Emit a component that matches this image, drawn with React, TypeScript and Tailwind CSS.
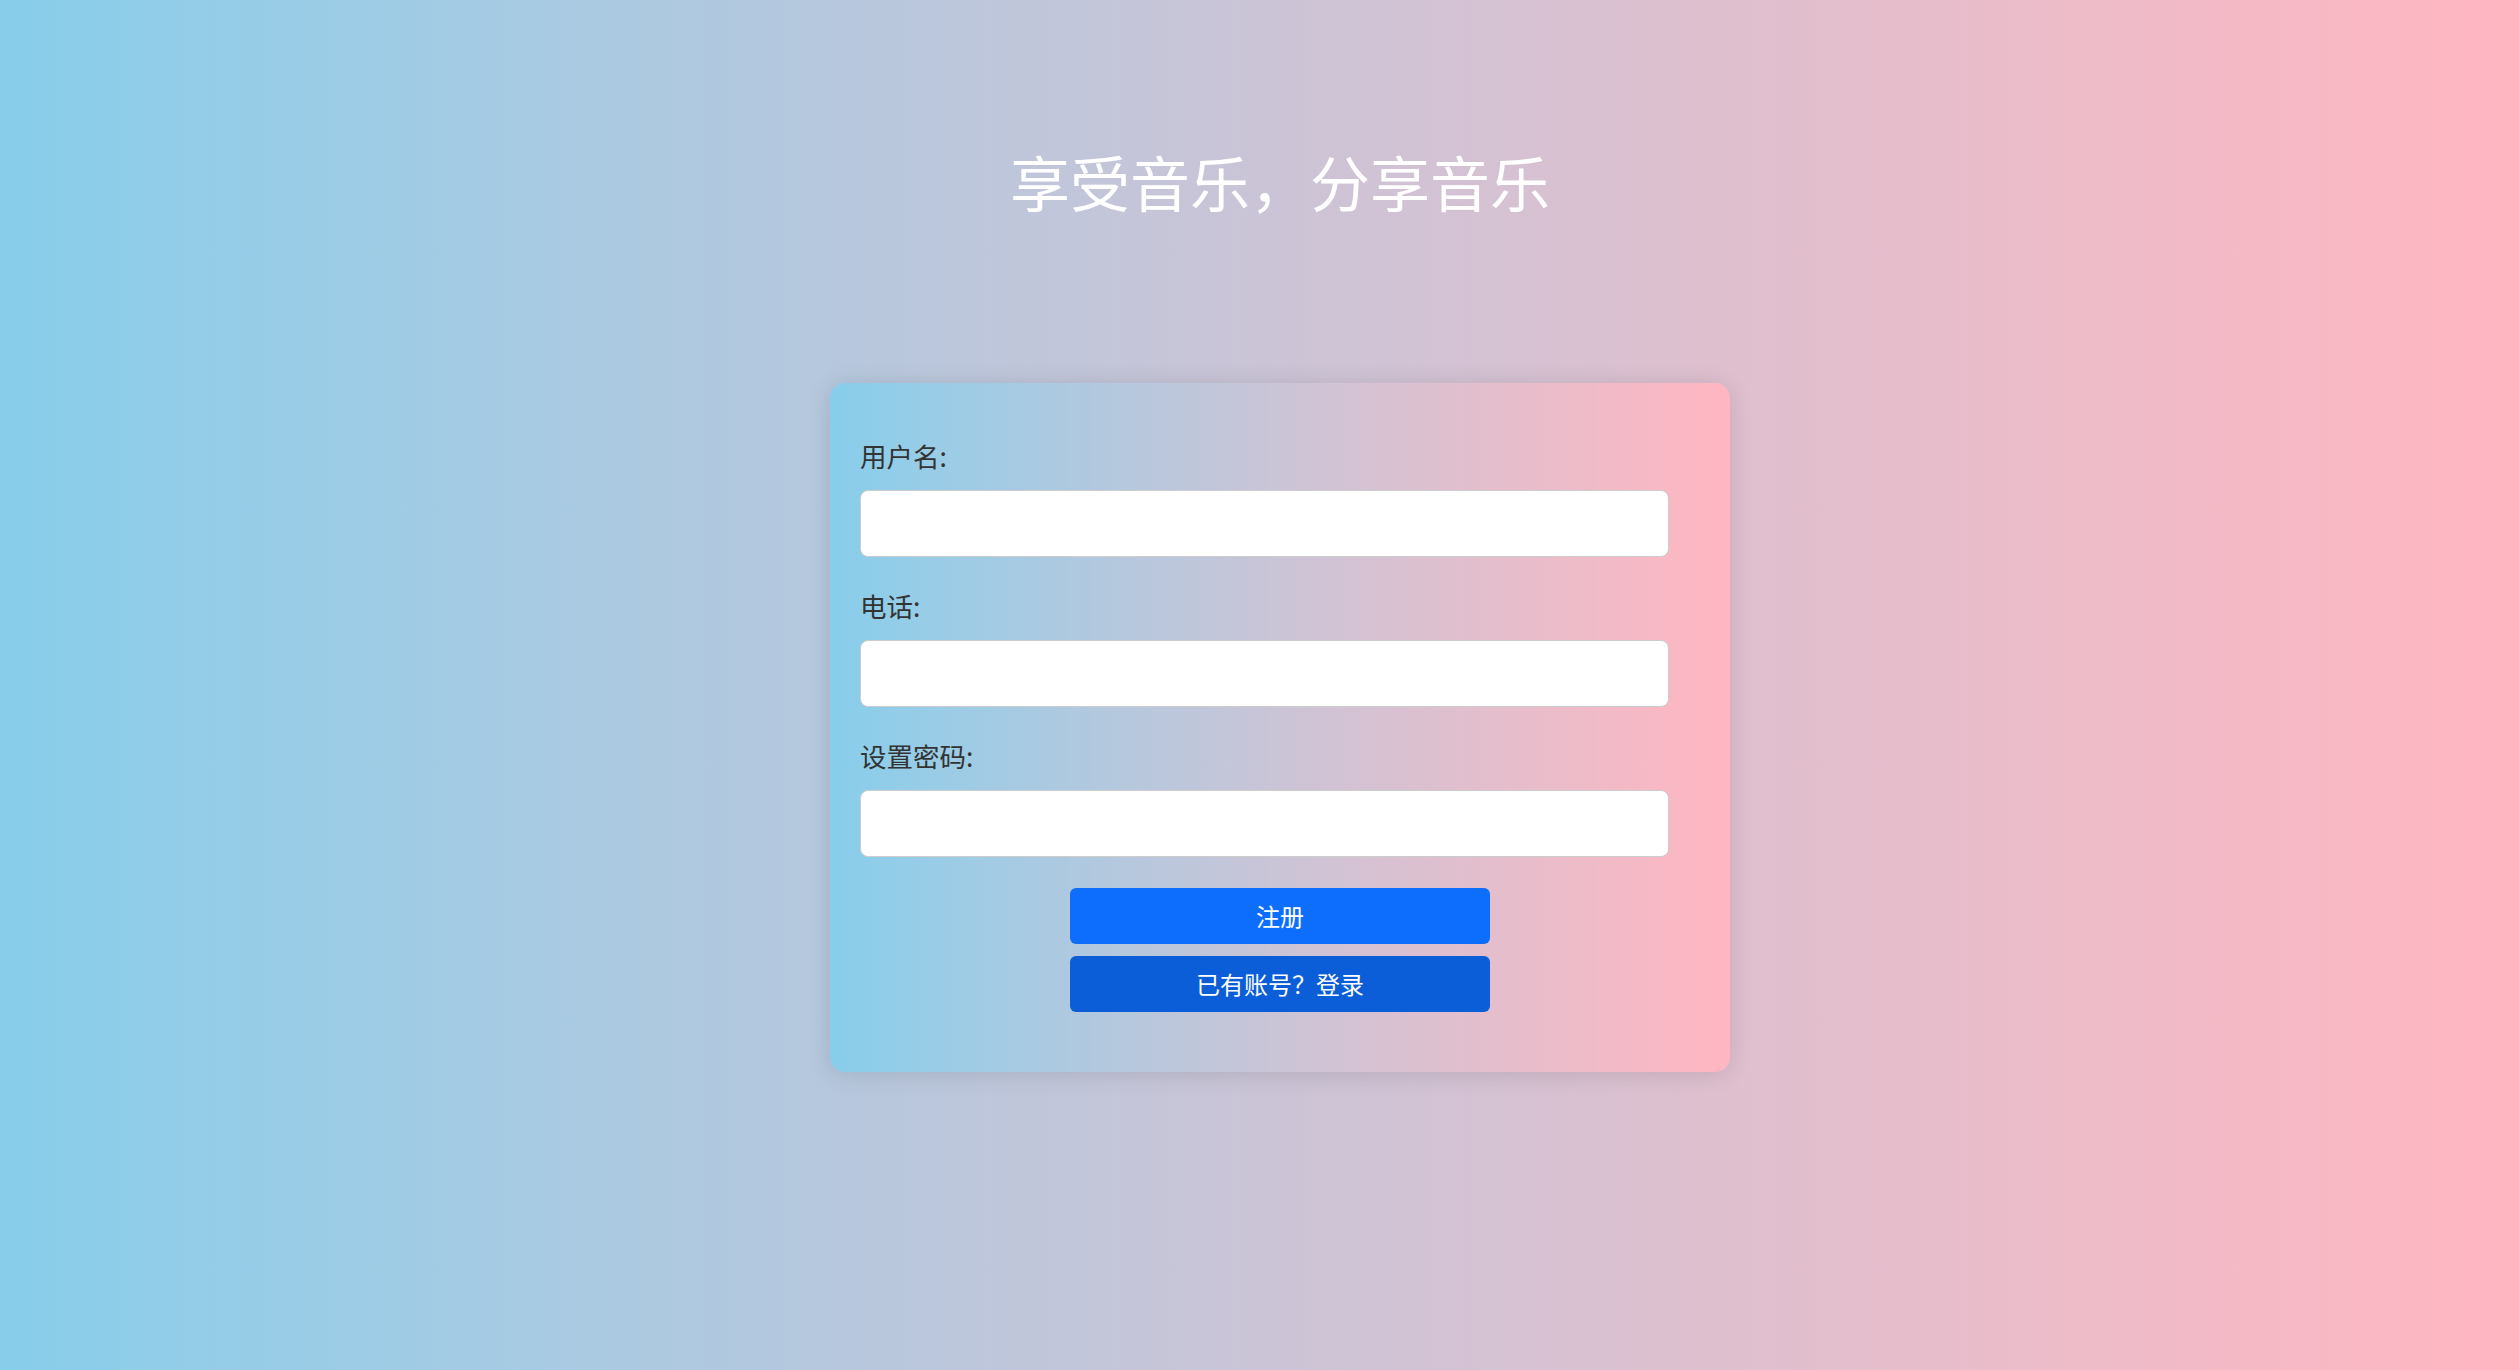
const fields = ["用户名:", "电话:", "设置密码:"];

export default function App() {
  return (
    <div
      className="min-h-screen w-full bg-linear-to-r from-[#87ceeb] to-[#ffb6c1] flex flex-col items-center"
      style={{ fontFamily: '"Noto Sans CJK SC", "Noto Sans", sans-serif' }}
    >
      <h1 className="mt-[136px] ml-[41px] text-[60px] leading-[90px] font-normal text-white">
        享受音乐，分享音乐
      </h1>

      <div className="mt-[157px] ml-[41px] w-[900px] rounded-[15px] bg-linear-to-r from-[#87ceeb] to-[#ffb6c1] pt-[55px] pb-[60px] pl-[30px] shadow-[0_2px_24px_rgba(0,0,0,0.12)]">
        <form className="flex flex-col gap-[31px]" onSubmit={(e) => e.preventDefault()}>
          {fields.map((label, i) => (
            <div key={i} className="flex flex-col">
              <label className="text-[26.5px] leading-[36px] text-[#333]">{label}</label>
              <input
                type={i === 2 ? "password" : "text"}
                className="mt-4 h-[67px] w-[809px] rounded-[8px] border border-[#ccc] bg-white px-3 text-[24px] outline-none"
              />
            </div>
          ))}
          <div className="flex flex-col items-center gap-3 pr-[30px]">
            <button className="h-[56px] w-[420px] rounded-[6px] bg-[#0d6efd] text-[24px] text-white">
              注册
            </button>
            <button className="h-[56px] w-[420px] rounded-[6px] bg-[#0b5ed7] text-[24px] text-white">
              已有账号？登录
            </button>
          </div>
        </form>
      </div>
    </div>
  );
}
